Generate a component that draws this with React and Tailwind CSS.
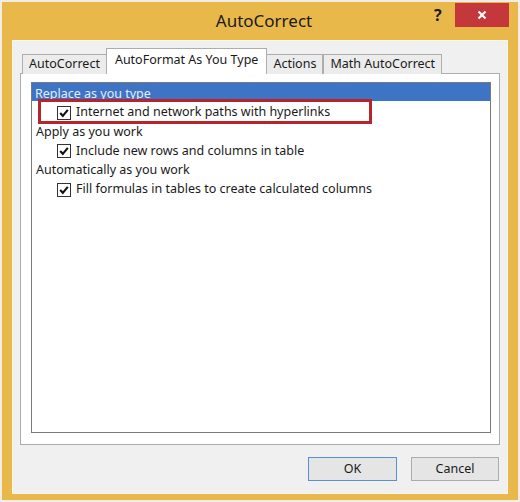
import React from 'react';

const font = { fontFamily: '"Noto Sans", "Open Sans", sans-serif' };

const Check = () => (
  <span className="w-[14px] h-[14px] border border-[#333] bg-white flex items-center justify-center shrink-0">
    <svg width="12" height="12" viewBox="0 0 12 12">
      <path d="M2.2 6 L4.8 8.8 L9.8 2.8" fill="none" stroke="#111" strokeWidth="2.1" />
    </svg>
  </span>
);

const Row = ({ label }) => (
  <div className="h-[19.3px] flex items-center gap-[5px] pl-[25px]">
    <Check />
    <span>{label}</span>
  </div>
);

const Heading = ({ label }) => (
  <div className="h-[19.3px] flex items-center pl-[4px]">{label}</div>
);

export default function App() {
  const tabs = ['AutoCorrect', 'AutoFormat As You Type', 'Actions', 'Math AutoCorrect'];

  return (
    <div
      className="w-[520px] h-[502px] border-2 border-[#f1ede4] bg-[#e9b84a] flex flex-col text-[#1a1a1a]"
      style={font}
    >
      {/* Title bar */}
      <div className="h-[38px] flex items-start relative">
        <div className="flex-1 text-center text-[17px] pt-[6px] pl-[8px]">AutoCorrect</div>
        <span className="absolute left-[432px] top-[1px] text-[16px] font-bold">?</span>
        <div className="absolute left-[453px] top-[1px] w-[54px] h-[24px] bg-[#c4373a] flex items-center justify-center">
          <svg width="10" height="10" viewBox="0 0 10 10">
            <path d="M1.5 1.5 L8.5 8.5 M8.5 1.5 L1.5 8.5" stroke="#fff" strokeWidth="2.2" />
          </svg>
        </div>
      </div>

      {/* Client area */}
      <div className="flex-1 mx-[10px] mb-[6px] bg-[#f0f0f0] border border-[#fbf6ea] pt-[7px] pl-[7px] pr-[7px] flex flex-col text-[12.5px]">
        {/* Tabs */}
        <div className="flex items-end h-[26px] pl-[2px] relative z-10">
          {tabs.map((t, i) =>
            i === 1 ? (
              <div
                key={t}
                className="h-[26px] px-[8px] bg-white border border-[#adadad] border-b-0 flex items-start pt-[2px] -mx-[1px] relative z-10"
              >
                {t}
              </div>
            ) : (
              <div
                key={t}
                className="h-[20px] px-[6px] bg-[#ececec] border border-[#adadad] border-b-0 flex items-center"
              >
                {t}
              </div>
            )
          )}
        </div>

        {/* Panel */}
        <div className="h-[372px] -mt-[1px] bg-white border border-[#adadad] pt-[8px] pl-[10px] pr-[8px] pb-[11px] flex">
          <div className="flex-1 border border-[#7a7a7a] relative">
            <div className="h-[18px] bg-[#3d74c6] text-[#e4ecf8] pl-[3px] leading-[15px] overflow-hidden pt-[3px]">
              Replace as you type
            </div>
            <div className="pt-[2px]">
              <Row label="Internet and network paths with hyperlinks" />
              <Heading label="Apply as you work" />
              <Row label="Include new rows and columns in table" />
              <Heading label="Automatically as you work" />
              <Row label="Fill formulas in tables to create calculated columns" />
            </div>
            <div className="absolute left-[6px] top-[16px] w-[334px] h-[25px] border-[3px] border-[#b5252b]" />
          </div>
        </div>

        {/* Buttons */}
        <div className="flex justify-end gap-[14px] mt-[12px] pr-[1px]">
          <button className="w-[89px] h-[24px] bg-[#e5e5e5] border border-[#5b8fd3]">OK</button>
          <button className="w-[88px] h-[24px] bg-[#e5e5e5] border border-[#acacac]">Cancel</button>
        </div>
      </div>
    </div>
  );
}
